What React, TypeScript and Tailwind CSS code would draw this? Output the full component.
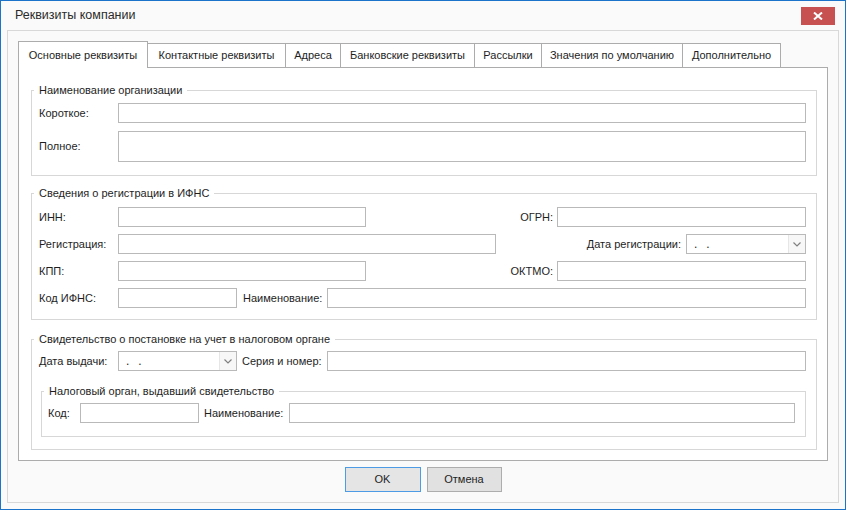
import React from 'react';

const tabs = [
  { label: 'Основные реквизиты', w: 'w-[130px]', active: true },
  { label: 'Контактные реквизиты', w: 'w-[138px]' },
  { label: 'Адреса', w: 'w-[55px]' },
  { label: 'Банковские реквизиты', w: 'w-[134px]' },
  { label: 'Рассылки', w: 'w-[67px]' },
  { label: 'Значения по умолчанию', w: 'w-[141px]' },
  { label: 'Дополнительно', w: 'w-[99px]', last: true },
];

const Field: React.FC<{ className?: string }> = ({ className = '' }) => (
  <div className={`h-[20px] border border-[#b9b9b9] bg-white ${className}`} />
);

const Combo: React.FC<{ className?: string }> = ({ className = '' }) => (
  <div className={`h-[20px] border border-[#b9b9b9] bg-white flex items-center ${className}`}>
    <span className="flex-1 pl-[7px] text-[12px] leading-none tracking-[9px]">..</span>
    <div className="w-[17px] h-full flex items-center justify-center bg-[#f7f7f7] border-l border-[#e6e6e6]">
      <svg width="8" height="5" viewBox="0 0 8 5">
        <path d="M0.5 0.5 L4 4 L7.5 0.5" fill="none" stroke="#808080" strokeWidth="1.2" />
      </svg>
    </div>
  </div>
);

const Group: React.FC<{ title: string; className?: string; children: React.ReactNode }> = ({ title, className = '', children }) => (
  <fieldset className={`border border-[#d7d7d7] ${className}`}>
    <legend className="ml-[2px] px-[5px] text-[11px] leading-[16px] whitespace-nowrap">{title}</legend>
    {children}
  </fieldset>
);

export default function App() {
  return (
    <div className="w-[846px] h-[510px] border border-[#1b74c9] bg-[#fafafa] flex flex-col font-['Liberation_Sans',Arial,sans-serif] text-[11px] text-[#1e1e1e] whitespace-nowrap overflow-hidden">
      {/* Title bar */}
      <div className="h-[29px] shrink-0 flex items-center justify-between">
        <span className="pl-[14px] text-[12.5px] text-[#2b2b2b]">Реквизиты компании</span>
        <button className="mr-[10px] w-[34px] h-[18px] bg-[#c75050] flex items-center justify-center" aria-label="Close">
          <svg width="10" height="8" viewBox="0 0 10 8">
            <path d="M1 0.5 L9 7.5 M9 0.5 L1 7.5" stroke="#fff" strokeWidth="2" />
          </svg>
        </button>
      </div>

      {/* Outer panel */}
      <div className="ml-[6px] w-[832px] h-[473px] border border-[#d8d8d8] pl-[10px] pt-[10px] flex flex-col">
        {/* Tabs */}
        <div className="flex items-end h-[26px]">
          {tabs.map(t => (
            <div
              key={t.label}
              className={
                t.active
                  ? `${t.w} h-[27px] -mb-px -mr-px relative z-10 bg-white border border-b-0 border-[#acacac] flex items-center justify-center`
                  : `${t.w} h-[24px] border-t border-l ${t.last ? 'border-r' : ''} border-[#acacac] bg-white flex items-center justify-center`
              }
            >
              <span className="leading-none">{t.label}</span>
            </div>
          ))}
        </div>

        {/* Tab page */}
        <div className="w-[810px] h-[394px] border border-[#acacac] bg-white pl-[12px] pr-[10px]">
          <Group title="Наименование организации" className="mt-[14px]">
            <div className="pt-[5px] pl-[7px] pr-[10px] pb-[13px] flex flex-col gap-[8px]">
              <div className="flex items-center">
                <span className="w-[79px]">Короткое:</span>
                <Field className="flex-1" />
              </div>
              <div className="flex items-center">
                <span className="w-[79px]">Полное:</span>
                <div className="flex-1 h-[31px] border border-[#b9b9b9] bg-white" />
              </div>
            </div>
          </Group>

          <Group title="Сведения о регистрации в ИФНС" className="mt-[9px]">
            <div className="pt-[6px] pl-[7px] pr-[10px] pb-[11px] flex flex-col gap-[7px]">
              <div className="flex items-center">
                <span className="w-[79px]">ИНН:</span>
                <Field className="w-[248px]" />
                <div className="flex-1" />
                <span className="mr-[4px]">ОГРН:</span>
                <Field className="w-[249px]" />
              </div>
              <div className="flex items-center">
                <span className="w-[79px]">Регистрация:</span>
                <Field className="w-[378px]" />
                <div className="flex-1" />
                <span className="mr-[5px]">Дата регистрации:</span>
                <Combo className="w-[120px]" />
              </div>
              <div className="flex items-center">
                <span className="w-[79px]">КПП:</span>
                <Field className="w-[248px]" />
                <div className="flex-1" />
                <span className="mr-[4px]">ОКТМО:</span>
                <Field className="w-[249px]" />
              </div>
              <div className="flex items-center">
                <span className="w-[79px]">Код ИФНС:</span>
                <Field className="w-[119px]" />
                <span className="ml-[6px] w-[84px]">Наименование:</span>
                <Field className="flex-1" />
              </div>
            </div>
          </Group>

          <Group title="Свидетельство о постановке на учет в налоговом органе" className="mt-[11px]">
            <div className="pt-[4px] pl-[7px] pr-[10px] pb-[12px]">
              <div className="flex items-center">
                <span className="w-[79px]">Дата выдачи:</span>
                <Combo className="w-[119px]" />
                <span className="ml-[5px] w-[85px]">Серия и номер:</span>
                <Field className="flex-1" />
              </div>
              <Group title="Налоговый орган, выдавший свидетельство" className="mt-[12px] ml-[2px]">
                <div className="pt-[4px] pl-[6px] pr-[10px] pb-[13px] flex items-center">
                  <span className="w-[32px]">Код:</span>
                  <Field className="w-[119px]" />
                  <span className="ml-[5px] w-[85px]">Наименование:</span>
                  <Field className="flex-1" />
                </div>
              </Group>
            </div>
          </Group>
        </div>

        {/* Buttons */}
        <div className="mt-[6px] w-[810px] flex justify-center gap-[6px]">
          <button className="w-[76px] h-[25px] border border-[#4c9be4] bg-[#e5e5e5]">OK</button>
          <button className="w-[75px] h-[25px] border border-[#adadad] bg-[#e1e1e1]">Отмена</button>
        </div>
      </div>
    </div>
  );
}
